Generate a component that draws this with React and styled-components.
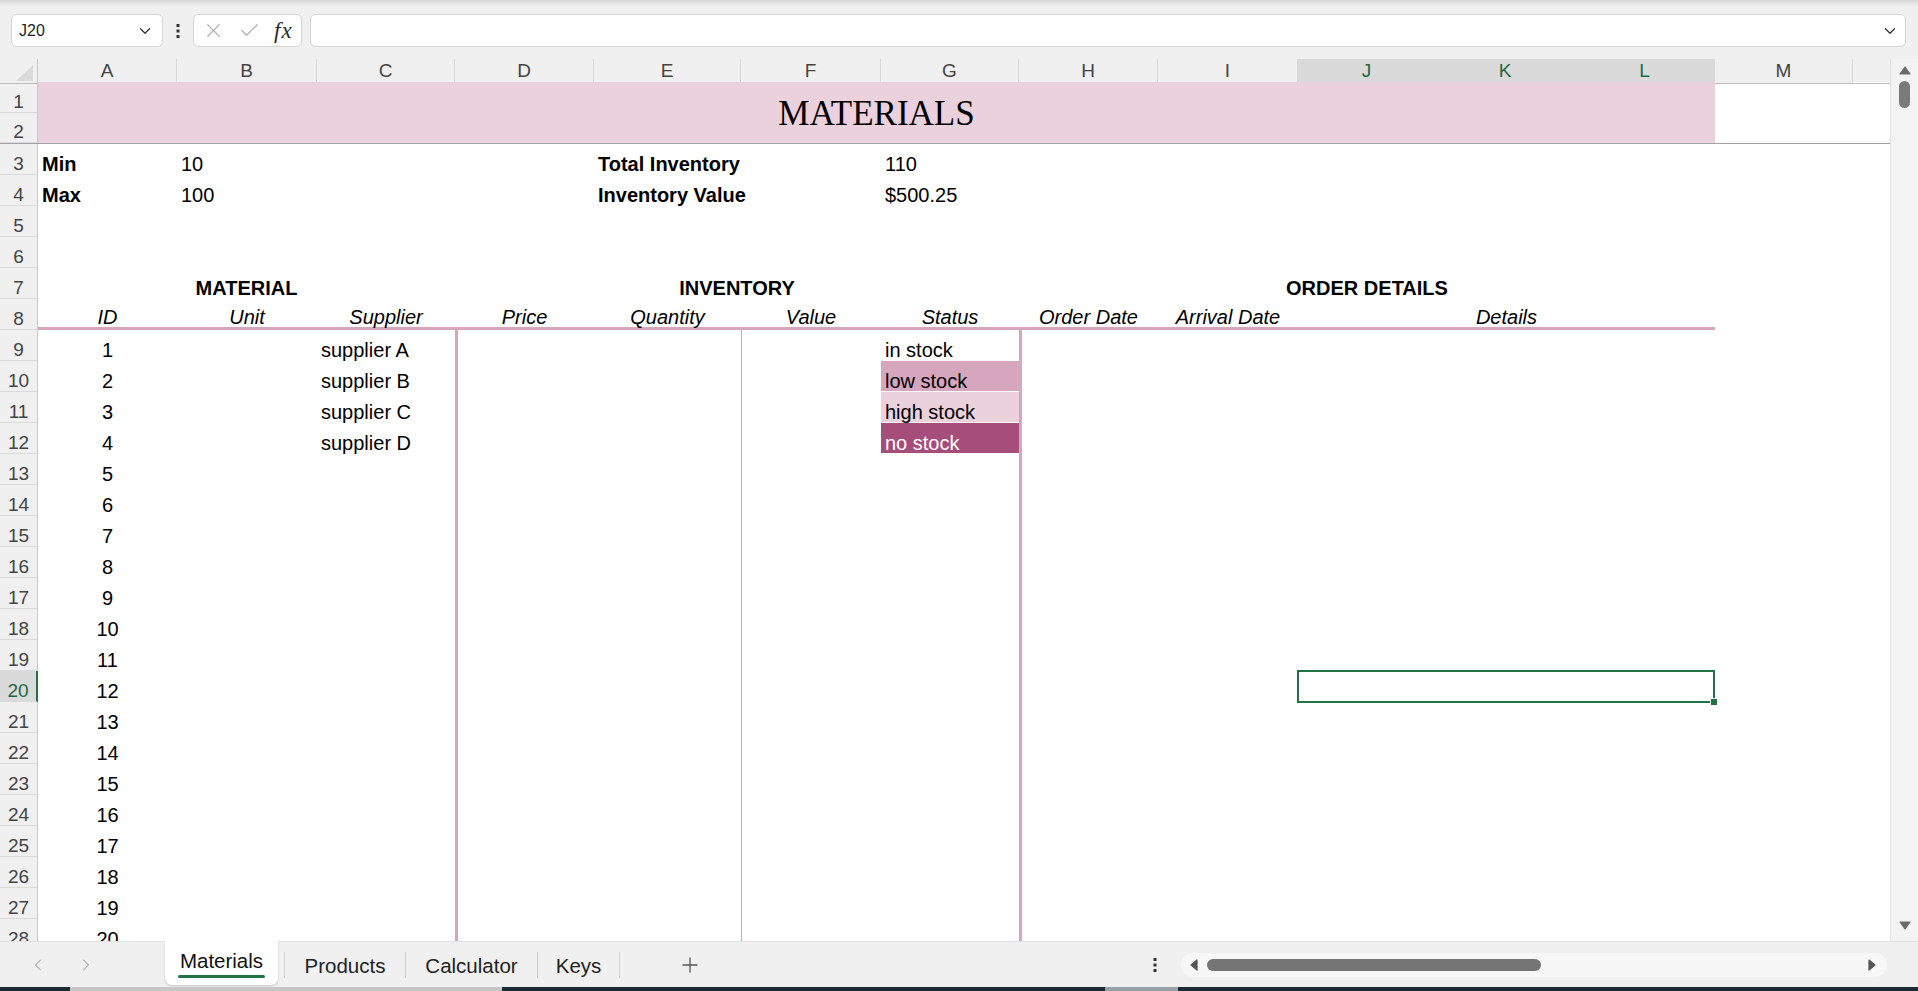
import React from 'react';
import styled, { createGlobalStyle } from 'styled-components';
import { ChevronDown, ChevronLeft, ChevronRight, X, Check, Plus } from 'lucide-react';

const COL_WIDTHS = [139, 140, 138, 139, 147, 140, 138, 139, 140, 138, 139, 140, 138];
const LETTERS = 'ABCDEFGHIJKLM'.split('');
const TEMPLATE = `38px ${COL_WIDTHS.map(w => `${w}px`).join(' ')} 1fr`;
const PINK_LINE = '#d5a6bd';
const GREEN = '#217346';
const SELECTED_COLS = ['J', 'K', 'L'];
const ACTIVE_ROW = 20;
const LAST_ROW = 28;

const SUPPLIERS = { 9: 'supplier A', 10: 'supplier B', 11: 'supplier C', 12: 'supplier D' };
const STATUS = {
    9: { text: 'in stock' },
    10: { text: 'low stock', bg: '#d5a6bd' },
    11: { text: 'high stock', bg: '#ead1dc' },
    12: { text: 'no stock', bg: '#a64d79', color: '#fff' },
};

// cells for the fixed rows, col is 0 for column A
const FIXED_ROWS = {
    3: [
        { col: 0, text: 'Min', bold: true },
        { col: 1, text: '10' },
        { col: 4, text: 'Total Inventory', bold: true },
        { col: 6, text: '110' },
    ],
    4: [
        { col: 0, text: 'Max', bold: true },
        { col: 1, text: '100' },
        { col: 4, text: 'Inventory Value', bold: true },
        { col: 6, text: '$500.25' },
    ],
    5: [],
    6: [],
    7: [
        { col: 0, span: 3, text: 'MATERIAL', bold: true, center: true },
        { col: 3, span: 4, text: 'INVENTORY', bold: true, center: true },
        { col: 7, span: 5, text: 'ORDER DETAILS', bold: true, center: true },
    ],
    8: [
        ...['ID', 'Unit', 'Supplier', 'Price', 'Quantity', 'Value', 'Status', 'Order Date', 'Arrival Date'].map((text, col) => ({
            col, text, italic: true, center: true, underline: true,
        })),
        { col: 9, span: 3, text: 'Details', italic: true, center: true, underline: true },
    ],
};

const dataRowCells = n => {
    const status = STATUS[n];
    return [
        { col: 0, text: String(n - 8), center: true },
        { col: 2, text: SUPPLIERS[n] || '' },
        { col: 3, rule: 3 },
        { col: 5, rule: 1 },
        { col: 6, text: status ? status.text : '', bg: status && status.bg, color: status && status.color, split: !!status },
        { col: 7, rule: 3 },
    ];
};

const GlobalStyle = createGlobalStyle`
    html, body {
        margin: 0;
        padding: 0;
        background: #f0f0f0;
        font-family: "Liberation Sans", Arial, sans-serif;
        overflow: hidden;
    }
`;

const Page = styled.div`
    width: 100%;
    height: 991px;
    display: flex;
    flex-direction: column;
    background: #f0f0f0;
`;

const Toolbar = styled.div`
    height: 59px;
    flex-shrink: 0;
    display: flex;
    align-items: center;
    padding: 2px 12px 0 11px;
    box-sizing: border-box;
    background: linear-gradient(#d4d4d4 0, #e9e9e9 4px, #f0f0f0 8px);
`;

const Field = styled.div`
    height: 33px;
    box-sizing: border-box;
    background: #fff;
    border: 1px solid #d6d6d6;
    border-radius: 5px;
    display: flex;
    align-items: center;
`;

const NameBox = styled(Field)`
    width: 152px;
    padding: 0 8px 0 7px;
    justify-content: space-between;
    font-size: 16px;
    color: #1f1f1f;
`;

const DotsWrap = styled.div`
    width: 30px;
    display: flex;
    justify-content: center;
    color: #333;
`;

const FxBox = styled(Field)`
    width: 109px;
    padding: 0 8px 0 8px;
    gap: 13px;
    color: #b3b3b3;
`;

const FxLabel = styled.span`
    font-family: "Liberation Serif", "Times New Roman", serif;
    font-style: italic;
    font-size: 23px;
    color: #2b2b2b;
    letter-spacing: 1px;
`;

const FormulaBar = styled(Field)`
    flex: 1;
    margin-left: 8px;
    justify-content: flex-end;
    padding-right: 6px;
    color: #333;
`;

const Middle = styled.div`
    flex: 1;
    display: flex;
    min-height: 0;
`;

const Sheet = styled.div`
    flex: 1;
    display: flex;
    flex-direction: column;
    overflow: hidden;
    background: #fff;
`;

const HeaderRow = styled.div`
    display: grid;
    grid-template-columns: ${TEMPLATE};
    height: 23px;
    flex-shrink: 0;
    background: #f0f0f0;
`;

const Corner = styled.div`
    position: relative;
    border-right: 1px solid #c8c8c8;
    border-bottom: 1px solid #bdbdbd;
    box-sizing: border-box;
    display: flex;
    align-items: flex-end;
    justify-content: flex-end;
    padding: 0 4px 2px 0;
`;

const ColHead = styled.div`
    display: flex;
    align-items: center;
    justify-content: center;
    box-sizing: border-box;
    font-size: 19px;
    color: ${p => (p.$sel ? '#1d6b40' : '#444')};
    background: ${p => (p.$sel ? '#dadada' : '#f0f0f0')};
    border-right: 1px solid #d8d8d8;
    border-bottom: ${p => (p.$sel ? `2px solid ${GREEN}` : '1px solid #bdbdbd')};
    padding-top: ${p => (p.$sel ? '1px' : '0')};
`;

const HeaderFill = styled.div`
    border-bottom: 1px solid #bdbdbd;
`;

const TitleBlock = styled.div`
    display: grid;
    grid-template-columns: ${TEMPLATE};
    grid-template-rows: 31px 30px;
    height: 62px;
    flex-shrink: 0;
    box-sizing: border-box;
    border-bottom: 1px solid #a3a3a3;
`;

const Title = styled.div`
    grid-column: 2 / span 12;
    grid-row: 1 / span 2;
    background: #ead1dc;
    display: flex;
    align-items: center;
    justify-content: center;
    padding-top: 3px;
    font-family: "Liberation Serif", "Times New Roman", serif;
    font-size: 35px;
    color: #000;
`;

const Row = styled.div`
    display: grid;
    grid-template-columns: ${TEMPLATE};
    height: 31px;
    flex-shrink: 0;
`;

const RowNum = styled.div`
    grid-column: 1;
    grid-row: ${p => p.$row || 1};
    display: flex;
    align-items: flex-end;
    justify-content: center;
    padding-bottom: 0;
    box-sizing: border-box;
    font-size: 19px;
    line-height: 20px;
    color: ${p => (p.$active ? '#1d6b40' : '#444')};
    background: ${p => (p.$active ? '#dadada' : '#f0f0f0')};
    border-right: ${p => (p.$active ? `2px solid ${GREEN}` : '1px solid #c8c8c8')};
    border-bottom: 1px solid #dadada;
`;

const Cell = styled.div`
    grid-column: ${p => p.$col + 2} / span ${p => p.$span || 1};
    grid-row: 1;
    min-width: 0;
    display: flex;
    align-items: flex-end;
    justify-content: ${p => (p.$center ? 'center' : 'flex-start')};
    padding: 0 4px 0;
    box-sizing: border-box;
    white-space: nowrap;
    font-size: 20px;
    line-height: 22px;
    font-weight: ${p => (p.$bold ? 700 : 400)};
    font-style: ${p => (p.$italic ? 'italic' : 'normal')};
    color: ${p => p.$color || '#000'};
    background: ${p => p.$bg || 'transparent'};
    border-left: ${p => (p.$rule ? `${p.$rule}px solid ${PINK_LINE}` : 'none')};
    box-shadow: ${p => (p.$underline ? `inset 0 -3px 0 ${PINK_LINE}` : p.$split ? 'inset 0 -1px 0 #fff' : 'none')};
    padding-bottom: ${p => (p.$underline ? '2px' : '0')};
`;

const Selection = styled.div`
    grid-column: ${p => p.$col + 2} / span ${p => p.$span};
    grid-row: 1;
    position: relative;
    margin: -1px 0 -1px -1px;
    border: 2px solid ${GREEN};
`;

const FillHandle = styled.span`
    position: absolute;
    right: -5px;
    bottom: -5px;
    width: 6px;
    height: 6px;
    background: ${GREEN};
    border: 1px solid #fff;
`;

const VScroll = styled.div`
    width: 28px;
    flex-shrink: 0;
    display: flex;
    flex-direction: column;
    align-items: center;
    background: #f3f3f3;
    border-left: 1px solid #e2e2e2;
    box-sizing: border-box;
    padding: 6px 0 9px;
`;

const VThumb = styled.div`
    width: 11px;
    height: 27px;
    margin-top: 4px;
    border-radius: 6px;
    background: #7a7a7a;
`;

const Spacer = styled.div`
    flex: 1;
`;

const TabBar = styled.div`
    height: 46px;
    flex-shrink: 0;
    display: flex;
    align-items: center;
    padding-left: 14px;
    background: #f0f0f0;
    border-top: 1px solid #e2e2e2;
    box-sizing: border-box;
`;

const NavButton = styled.div`
    width: 48px;
    display: flex;
    justify-content: center;
    color: #8f8f8f;
`;

const Tabs = styled.div`
    display: flex;
    align-items: center;
    height: 100%;
    margin-left: 55px;
`;

const Tab = styled.div`
    width: ${p => p.$w}px;
    height: 100%;
    display: flex;
    align-items: center;
    justify-content: center;
    font-size: 20.5px;
    color: #222;
    padding-top: 3px;
    box-sizing: border-box;
`;

const ActiveTab = styled.div`
    width: 113px;
    height: 44px;
    align-self: flex-start;
    margin-top: -1px;
    display: flex;
    flex-direction: column;
    align-items: center;
    justify-content: center;
    gap: 2px;
    background: #fff;
    border-radius: 0 0 7px 7px;
    box-shadow: 0 1px 2px rgba(0, 0, 0, 0.18);
    font-size: 20.5px;
    color: #111;
`;

const TabUnderline = styled.span`
    width: 87px;
    height: 3px;
    border-radius: 2px;
    background: ${GREEN};
`;

const Divider = styled.span`
    width: 1px;
    height: 26px;
    background: #cfcfcf;
    margin-left: ${p => p.$gap || 0}px;
`;

const AddButton = styled.div`
    width: 140px;
    display: flex;
    justify-content: center;
    color: #555;
`;

const MoreDots = styled.div`
    width: 20px;
    display: flex;
    justify-content: center;
    color: #333;
    margin-right: 16px;
`;

const HScroll = styled.div`
    width: 706px;
    height: 24px;
    margin-right: 31px;
    display: flex;
    align-items: center;
    padding: 0 9px 0 8px;
    box-sizing: border-box;
    border-radius: 12px;
    background: #f7f7f7;
`;

const HThumb = styled.div`
    width: 334px;
    height: 12px;
    margin-left: 6px;
    border-radius: 6px;
    background: #757575;
`;

const Taskbar = styled.div`
    height: 4px;
    flex-shrink: 0;
    background: linear-gradient(90deg, #1e2b33 0 70px, #c7c7c7 70px 502px, #1e2b33 502px 1105px, #9aa1a6 1105px 1178px, #1e2b33 1178px);
`;

const Dots = () => (
    <svg width="4" height="16" viewBox="0 0 4 16">
        <rect x="0.5" y="1" width="3" height="3" fill="currentColor" />
        <rect x="0.5" y="6.5" width="3" height="3" fill="currentColor" />
        <rect x="0.5" y="12" width="3" height="3" fill="currentColor" />
    </svg>
);

const Triangle = ({ dir, color = '#6b6b6b' }) => {
    const points = {
        up: '1,9 6,2 11,9',
        down: '1,2 6,9 11,2',
        left: '8,1 2,6 8,11',
        right: '3,1 9,6 3,11',
    }[dir];
    return (
        <svg width="12" height="12" viewBox="0 0 12 12">
            <polygon points={points} fill={color} strokeLinejoin="round" stroke={color} strokeWidth="1.2" />
        </svg>
    );
};

const SheetRow = ({ n }) => {
    const cells = FIXED_ROWS[n] || dataRowCells(n);
    return (
        <Row>
            <RowNum $active={n === ACTIVE_ROW}>{n}</RowNum>
            {cells.map(c => (
                <Cell
                    key={c.col}
                    $col={c.col}
                    $span={c.span}
                    $bold={c.bold}
                    $italic={c.italic}
                    $center={c.center}
                    $underline={c.underline}
                    $rule={c.rule}
                    $bg={c.bg}
                    $color={c.color}
                    $split={c.split}
                >
                    {c.text}
                </Cell>
            ))}
            {n === ACTIVE_ROW && (
                <Selection $col={9} $span={3}>
                    <FillHandle />
                </Selection>
            )}
        </Row>
    );
};

const App = () => {
    const rows = [];
    for (let n = 3; n <= LAST_ROW; n++) rows.push(n);

    return (
        <Page>
            <GlobalStyle />
            <Toolbar>
                <NameBox>
                    <span>J20</span>
                    <ChevronDown size={18} strokeWidth={1.6} color="#333" />
                </NameBox>
                <DotsWrap>
                    <Dots />
                </DotsWrap>
                <FxBox>
                    <X size={23} strokeWidth={1.3} />
                    <Check size={23} strokeWidth={1.3} />
                    <FxLabel>fx</FxLabel>
                </FxBox>
                <FormulaBar>
                    <ChevronDown size={18} strokeWidth={1.6} />
                </FormulaBar>
            </Toolbar>

            <Middle>
                <Sheet>
                    <HeaderRow>
                        <Corner>
                            <svg width="17" height="16" viewBox="0 0 17 16">
                                <polygon points="17,0 17,16 0,16" fill="#dadada" />
                            </svg>
                        </Corner>
                        {LETTERS.map(l => (
                            <ColHead key={l} $sel={SELECTED_COLS.includes(l)}>{l}</ColHead>
                        ))}
                        <HeaderFill />
                    </HeaderRow>

                    <TitleBlock>
                        <RowNum $row={1}>1</RowNum>
                        <RowNum $row={2}>2</RowNum>
                        <Title>MATERIALS</Title>
                    </TitleBlock>

                    {rows.map(n => <SheetRow key={n} n={n} />)}
                </Sheet>

                <VScroll>
                    <Triangle dir="up" />
                    <VThumb />
                    <Spacer />
                    <Triangle dir="down" />
                </VScroll>
            </Middle>

            <TabBar>
                <NavButton><ChevronLeft size={20} strokeWidth={1.2} /></NavButton>
                <NavButton><ChevronRight size={20} strokeWidth={1.2} /></NavButton>
                <Tabs>
                    <ActiveTab>
                        <span>Materials</span>
                        <TabUnderline />
                    </ActiveTab>
                    <Divider $gap={6} />
                    <Tab $w={120}>Products</Tab>
                    <Divider />
                    <Tab $w={131}>Calculator</Tab>
                    <Divider />
                    <Tab $w={81}>Keys</Tab>
                    <Divider />
                    <AddButton><Plus size={24} strokeWidth={1.3} /></AddButton>
                </Tabs>
                <Spacer />
                <MoreDots><Dots /></MoreDots>
                <HScroll>
                    <Triangle dir="left" color="#555" />
                    <HThumb />
                    <Spacer />
                    <Triangle dir="right" color="#555" />
                </HScroll>
            </TabBar>
            <Taskbar />
        </Page>
    );
};

export default App;
